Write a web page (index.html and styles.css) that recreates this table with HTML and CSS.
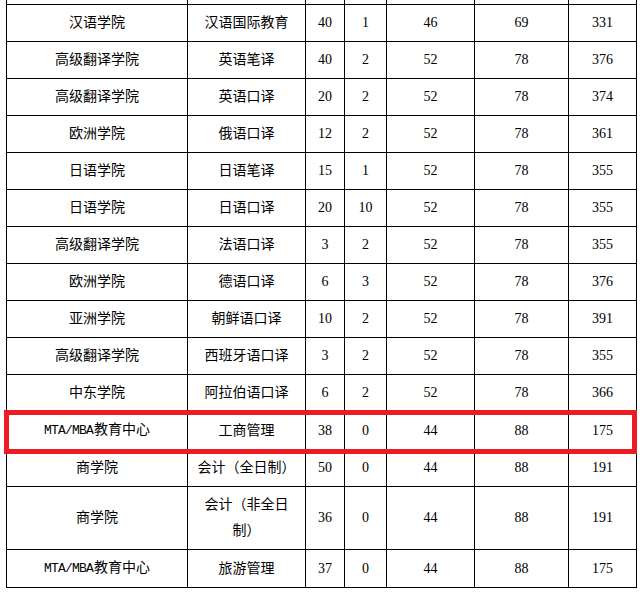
FILE: index.html
```html
<!DOCTYPE html>
<html lang="zh-CN">
<head>
<meta charset="utf-8">
<title>招生计划</title>
<link rel="stylesheet" href="styles.css">
</head>
<body>
<div class="wrap">
  <table class="plan">
    <colgroup>
      <col class="c1"><col class="c2"><col class="c3"><col class="c4"><col class="c5"><col class="c6"><col class="c7">
    </colgroup>
    <tbody>
      <tr class="cut"><td></td><td></td><td></td><td></td><td></td><td></td><td></td></tr>
      <tr><td>汉语学院</td><td>汉语国际教育</td><td>40</td><td>1</td><td>46</td><td>69</td><td>331</td></tr>
      <tr><td>高级翻译学院</td><td>英语笔译</td><td>40</td><td>2</td><td>52</td><td>78</td><td>376</td></tr>
      <tr><td>高级翻译学院</td><td>英语口译</td><td>20</td><td>2</td><td>52</td><td>78</td><td>374</td></tr>
      <tr><td>欧洲学院</td><td>俄语口译</td><td>12</td><td>2</td><td>52</td><td>78</td><td>361</td></tr>
      <tr><td>日语学院</td><td>日语笔译</td><td>15</td><td>1</td><td>52</td><td>78</td><td>355</td></tr>
      <tr><td>日语学院</td><td>日语口译</td><td>20</td><td>10</td><td>52</td><td>78</td><td>355</td></tr>
      <tr><td>高级翻译学院</td><td>法语口译</td><td>3</td><td>2</td><td>52</td><td>78</td><td>355</td></tr>
      <tr><td>欧洲学院</td><td>德语口译</td><td>6</td><td>3</td><td>52</td><td>78</td><td>376</td></tr>
      <tr><td>亚洲学院</td><td>朝鲜语口译</td><td>10</td><td>2</td><td>52</td><td>78</td><td>391</td></tr>
      <tr><td>高级翻译学院</td><td>西班牙语口译</td><td>3</td><td>2</td><td>52</td><td>78</td><td>355</td></tr>
      <tr><td>中东学院</td><td>阿拉伯语口译</td><td>6</td><td>2</td><td>52</td><td>78</td><td>366</td></tr>
      <tr><td><span class="latin">MTA/MBA</span>教育中心</td><td>工商管理</td><td>38</td><td>0</td><td>44</td><td>88</td><td>175</td></tr>
      <tr><td>商学院</td><td>会计（全日制）</td><td>50</td><td>0</td><td>44</td><td>88</td><td>191</td></tr>
      <tr><td>商学院</td><td>会计（非全日制）</td><td>36</td><td>0</td><td>44</td><td>88</td><td>191</td></tr>
      <tr><td><span class="latin">MTA/MBA</span>教育中心</td><td>旅游管理</td><td>37</td><td>0</td><td>44</td><td>88</td><td>175</td></tr>
    </tbody>
  </table>
  <div class="highlight"></div>
</div>
</body>
</html>
```

FILE: styles.css
```css
html, body {
  margin: 0;
  padding: 0;
  background: #ffffff;
}

.wrap {
  position: relative;
  display: flow-root;
  width: 642px;
  height: 594px;
  overflow: hidden;
}

.plan {
  margin: -33px 0 0 6px;
  border-collapse: collapse;
  table-layout: fixed;
  width: 630px;
  font-family: "Liberation Serif", "Noto Sans CJK SC", serif;
  font-size: 14px;
  color: #000000;
  text-spacing-trim: space-all;
}

.c1 { width: 181px; }
.c2 { width: 118px; }
.c3 { width: 39px; }
.c4 { width: 42px; }
.c5 { width: 88px; }
.c6 { width: 94px; }
.c7 { width: 68px; }

.plan td {
  border: 1px solid #000000;
  padding: 5px 6px;
  line-height: 26px;
  text-align: center;
  vertical-align: middle;
  font-family: "Liberation Serif", "Noto Sans CJK SC", serif;
  text-spacing-trim: space-all;
}

.plan .cut td {
  height: 26px;
}

.latin {
  font-family: "Liberation Mono", monospace;
  font-size: 13px;
  letter-spacing: -0.8px;
  margin-right: 0.8px;
}

.highlight {
  position: absolute;
  left: 4px;
  top: 410px;
  width: 623px;
  height: 34px;
  border: 5px solid #ed1c24;
}
```
